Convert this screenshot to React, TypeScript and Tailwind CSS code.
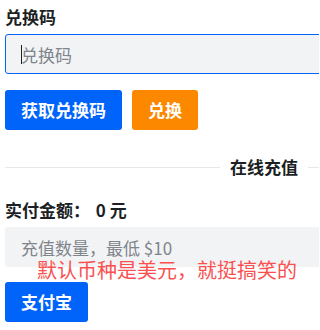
import { useState } from 'react'

const FONT = { fontFamily: '"Noto Sans CJK SC", "Noto Sans", sans-serif' }

const INPUT =
  'block h-[40px] w-full rounded-[3px] bg-[#f2f3f5] px-[16px] text-[17px] leading-[24px] text-[#1c1f23] placeholder:text-[#80858b] outline-none'

const BTN =
  'h-[40px] whitespace-nowrap rounded-[3px] px-[16px] text-[17px] font-bold leading-[24px] text-white'

export default function App() {
  const [code, setCode] = useState('')
  const [amount, setAmount] = useState('')

  return (
    <div className="relative h-[330px] w-[319px] overflow-hidden bg-white" style={FONT}>
      <div className="w-[523px] pl-[5px]">
        <h3 className="pt-[7px] text-[17px] font-bold leading-[20px] text-[#1c1f23]">兑换码</h3>
        <div className="relative mt-[7px]">
          <input
            className={`${INPUT} border border-[#0064fa] pl-[15px]`}
            placeholder="兑换码"
            value={code}
            onChange={(e) => setCode(e.target.value)}
          />
          {/* caret shown in the focused field */}
          <span className="pointer-events-none absolute left-[16px] top-[11px] h-[19px] w-px bg-[#1c1f23]" />
        </div>
        <div className="mt-[16px] flex gap-[10px]">
          <button type="button" className={`${BTN} bg-[#0064fa]`}>
            获取兑换码
          </button>
          <button type="button" className={`${BTN} bg-[#fc8800]`}>
            兑换
          </button>
        </div>

        <div className="mt-[27px] flex h-[20px] items-center">
          <div className="h-px flex-1 bg-[#e6e8ea]" />
          <span className="mx-[10px] text-[17px] font-bold leading-[20px] text-[#1c1f23]">在线充值</span>
          <div className="h-px flex-1 bg-[#e6e8ea]" />
        </div>

        <div className="mt-[23px] text-[17px] font-bold leading-[20px] text-[#1c1f23]">
          实付金额： <span className="ml-[2px]">0 元</span>
        </div>
        <input
          className={`${INPUT} mt-[7px]`}
          placeholder="充值数量，最低 $10"
          value={amount}
          onChange={(e) => setAmount(e.target.value)}
        />
        <button type="button" className={`${BTN} mt-[15px] bg-[#0064fa]`}>
          支付宝
        </button>
      </div>

      {/* annotation drawn over the screenshot */}
      <div className="absolute left-[37px] top-[258px] text-[20px] leading-[24px] text-[#fa5050]">
        默认币种是美元，就挺搞笑的
      </div>
    </div>
  )
}
